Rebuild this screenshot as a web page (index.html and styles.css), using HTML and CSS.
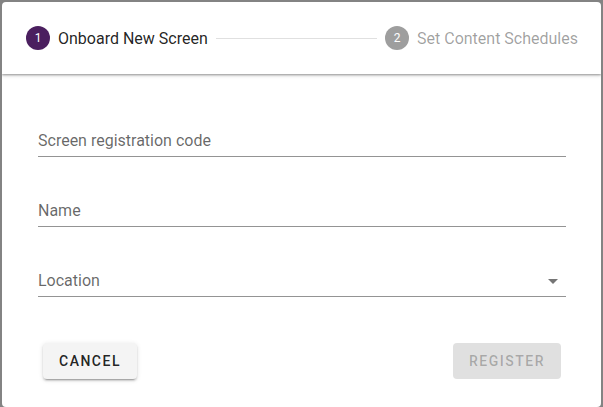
FILE: index.html
```html
<!DOCTYPE html>
<html>
<head>
<meta charset="utf-8">
<link rel="stylesheet" href="styles.css">
</head>
<body>
<div class="dialog">
  <div class="stepper">
    <div class="step active">
      <span class="step-icon">1</span>
      <span class="step-label">Onboard New Screen</span>
    </div>
    <div class="step-line"></div>
    <div class="step">
      <span class="step-icon">2</span>
      <span class="step-label">Set Content Schedules</span>
    </div>
  </div>
  <div class="content">
    <div class="form">
      <div class="field"><span class="label">Screen registration code</span></div>
      <div class="field"><span class="label">Name</span></div>
      <div class="field select"><span class="label">Location</span><span class="arrow"></span></div>
    </div>
    <div class="actions">
      <button class="btn btn-cancel">CANCEL</button>
      <button class="btn btn-register" disabled>REGISTER</button>
    </div>
  </div>
</div>
</body>
</html>
```
FILE: styles.css
```css
html, body {
  margin: 0;
  padding: 0;
  height: 100%;
}
body {
  background: #838383;
  font-family: Roboto, "Liberation Sans", sans-serif;
  overflow: hidden;
}
.dialog {
  margin: 2px 2px 0 2px;
  height: 405px;
  background: #fff;
  border-radius: 4px;
  overflow: hidden;
  display: flex;
  flex-direction: column;
}
.stepper {
  height: 72px;
  flex: none;
  display: flex;
  align-items: center;
  padding: 0 23px 0 24px;
  box-shadow: 0 1px 2px rgba(0,0,0,.35), 0 2px 4px rgba(0,0,0,.12);
  position: relative;
  z-index: 1;
}
.step {
  display: flex;
  align-items: center;
  gap: 8px;
}
.step-icon {
  width: 24px;
  height: 24px;
  border-radius: 50%;
  background: #9e9e9e;
  color: #fff;
  font-size: 12px;
  display: flex;
  align-items: center;
  justify-content: center;
}
.step.active .step-icon {
  background: #4b1f5f;
}
.step-label {
  font-size: 16px;
  color: rgba(0,0,0,.38);
  white-space: nowrap;
}
.step.active .step-label {
  color: rgba(0,0,0,.87);
}
.step-line {
  flex: 1;
  border-top: 1px solid #e0e0e0;
  margin: 0 8px;
}
.content {
  flex: 1;
  padding: 57px 35px 0 36px;
}
.form {
  display: flex;
  flex-direction: column;
  gap: 44px;
}
.field {
  height: 20px;
  padding-bottom: 5px;
  border-bottom: 1px solid rgba(0,0,0,.42);
  display: flex;
  align-items: center;
  justify-content: space-between;
}
.label {
  font-size: 16px;
  line-height: 20px;
  color: rgba(0,0,0,.6);
}
.arrow {
  width: 0;
  height: 0;
  border-left: 5px solid transparent;
  border-right: 5px solid transparent;
  border-top: 5px solid rgba(0,0,0,.54);
  margin-right: 8px;
}
.actions {
  display: flex;
  justify-content: space-between;
  margin-top: 46px;
  padding: 0 5px 0 5px;
}
.btn {
  height: 36px;
  padding: 0 16px;
  border: none;
  border-radius: 4px;
  font-family: Roboto, "Liberation Sans", sans-serif;
  font-size: 14px;
  font-weight: 500;
  letter-spacing: 1.5px;
}
.btn-cancel {
  background: #f4f4f4;
  color: rgba(0,0,0,.87);
  box-shadow: 0 3px 1px -2px rgba(0,0,0,.2), 0 2px 2px 0 rgba(0,0,0,.14), 0 1px 5px 0 rgba(0,0,0,.12);
}
.btn-register {
  background: #e0e0e0;
  color: rgba(0,0,0,.26);
}
```
